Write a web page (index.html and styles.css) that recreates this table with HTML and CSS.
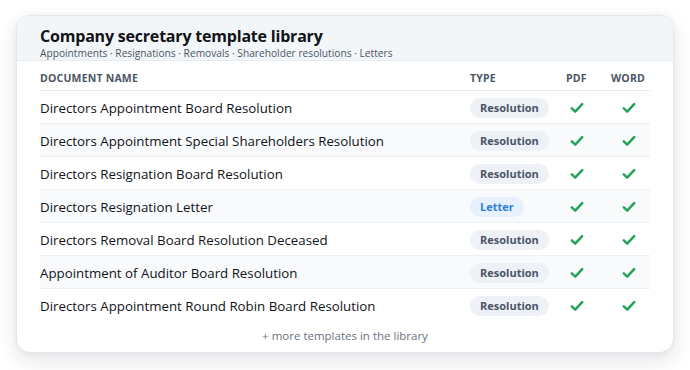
FILE: index.html
```html
<!DOCTYPE html>
<html lang="en">
<head>
<meta charset="utf-8">
<link rel="stylesheet" href="styles.css">
</head>
<body>
<div class="card">
  <div class="card-head">
    <h1 class="title">Company secretary template library</h1>
    <p class="subtitle">Appointments · Resignations · Removals · Shareholder resolutions · Letters</p>
  </div>
  <div class="table">
    <div class="row head">
      <div class="c-name">Document name</div>
      <div class="c-type">Type</div>
      <div class="c-pdf">PDF</div>
      <div class="c-word">Word</div>
    </div>
    <div class="row">
      <div class="c-name">Directors Appointment Board Resolution</div>
      <div class="c-type"><span class="badge">Resolution</span></div>
      <div class="c-pdf"><svg class="chk" viewBox="0 0 14 12"><path d="M1.8 6.4 5.2 9.6 12.2 2.2"/></svg></div>
      <div class="c-word"><svg class="chk" viewBox="0 0 14 12"><path d="M1.8 6.4 5.2 9.6 12.2 2.2"/></svg></div>
    </div>
    <div class="row alt">
      <div class="c-name">Directors Appointment Special Shareholders Resolution</div>
      <div class="c-type"><span class="badge">Resolution</span></div>
      <div class="c-pdf"><svg class="chk" viewBox="0 0 14 12"><path d="M1.8 6.4 5.2 9.6 12.2 2.2"/></svg></div>
      <div class="c-word"><svg class="chk" viewBox="0 0 14 12"><path d="M1.8 6.4 5.2 9.6 12.2 2.2"/></svg></div>
    </div>
    <div class="row">
      <div class="c-name">Directors Resignation Board Resolution</div>
      <div class="c-type"><span class="badge">Resolution</span></div>
      <div class="c-pdf"><svg class="chk" viewBox="0 0 14 12"><path d="M1.8 6.4 5.2 9.6 12.2 2.2"/></svg></div>
      <div class="c-word"><svg class="chk" viewBox="0 0 14 12"><path d="M1.8 6.4 5.2 9.6 12.2 2.2"/></svg></div>
    </div>
    <div class="row alt">
      <div class="c-name">Directors Resignation Letter</div>
      <div class="c-type"><span class="badge letter">Letter</span></div>
      <div class="c-pdf"><svg class="chk" viewBox="0 0 14 12"><path d="M1.8 6.4 5.2 9.6 12.2 2.2"/></svg></div>
      <div class="c-word"><svg class="chk" viewBox="0 0 14 12"><path d="M1.8 6.4 5.2 9.6 12.2 2.2"/></svg></div>
    </div>
    <div class="row">
      <div class="c-name">Directors Removal Board Resolution Deceased</div>
      <div class="c-type"><span class="badge">Resolution</span></div>
      <div class="c-pdf"><svg class="chk" viewBox="0 0 14 12"><path d="M1.8 6.4 5.2 9.6 12.2 2.2"/></svg></div>
      <div class="c-word"><svg class="chk" viewBox="0 0 14 12"><path d="M1.8 6.4 5.2 9.6 12.2 2.2"/></svg></div>
    </div>
    <div class="row alt">
      <div class="c-name">Appointment of Auditor Board Resolution</div>
      <div class="c-type"><span class="badge">Resolution</span></div>
      <div class="c-pdf"><svg class="chk" viewBox="0 0 14 12"><path d="M1.8 6.4 5.2 9.6 12.2 2.2"/></svg></div>
      <div class="c-word"><svg class="chk" viewBox="0 0 14 12"><path d="M1.8 6.4 5.2 9.6 12.2 2.2"/></svg></div>
    </div>
    <div class="row last">
      <div class="c-name">Directors Appointment Round Robin Board Resolution</div>
      <div class="c-type"><span class="badge">Resolution</span></div>
      <div class="c-pdf"><svg class="chk" viewBox="0 0 14 12"><path d="M1.8 6.4 5.2 9.6 12.2 2.2"/></svg></div>
      <div class="c-word"><svg class="chk" viewBox="0 0 14 12"><path d="M1.8 6.4 5.2 9.6 12.2 2.2"/></svg></div>
    </div>
  </div>
  <p class="more">+ more templates in the library</p>
</div>
</body>
</html>
```

FILE: styles.css
```css
* { box-sizing: border-box; }
html, body { margin: 0; padding: 0; background: #ffffff; }
body {
  font-family: "Open Sans", "Noto Sans", sans-serif;
  color: #111827;
  width: 690px;
  height: 370px;
  overflow: hidden;
  padding: 15px 16px 0;
}
.card {
  width: 658px;
  height: 338px;
  background: #ffffff;
  border: 1px solid #e3e7ec;
  border-radius: 14px;
  box-shadow: 0 8px 20px rgba(15, 23, 42, 0.11), 0 0 6px rgba(15, 23, 42, 0.05);
  overflow: hidden;
  display: flex;
  flex-direction: column;
}
.card-head {
  background: #f3f6f9;
  border-bottom: 1px solid #e6ebf0;
  padding: 11px 23px 0;
  height: 45px;
}
.title {
  margin: 0;
  font-size: 16px;
  line-height: 19px;
  font-weight: 700;
  letter-spacing: -0.2px;
  color: #111318;
}
.subtitle {
  margin: 1px 0 0;
  font-size: 10.2px;
  line-height: 12px;
  color: #4b5563;
}
.table {
  margin: 0 23px;
  display: flex;
  flex-direction: column;
}
.row {
  display: grid;
  grid-template-columns: 430px 96px 45px 39px;
  align-items: center;
  height: 33px;
  padding-top: 1px;
  border-bottom: 1px solid #eef1f4;
  font-size: 13.3px;
  color: #111318;
}
.row.alt { background: #f8fafc; }
.row.last { border-bottom: none; }
.row.head {
  height: 30px;
  padding-top: 5px;
  font-size: 10.5px;
  font-weight: 700;
  letter-spacing: 0.2px;
  text-transform: uppercase;
  color: #4b5563;
  border-bottom: 1px solid #e9edf1;
}
.c-pdf, .c-word { display: flex; }
.c-pdf .chk { margin-left: 4px; }
.c-word .chk { margin-left: 11px; }
.badge {
  display: inline-block;
  height: 20px;
  line-height: 20px;
  padding: 0 10px;
  border-radius: 10px;
  background: #eef1f5;
  color: #4a5568;
  font-size: 11px;
  font-weight: 700;
}
.badge.letter {
  background: #e6f1fd;
  color: #2f7fd6;
}
.chk {
  width: 14px;
  height: 12px;
  fill: none;
  stroke: #25a25a;
  stroke-width: 2.5;
  stroke-linecap: round;
  stroke-linejoin: round;
}
.more {
  margin: 6px 0 0;
  text-align: center;
  font-size: 11.5px;
  line-height: 16px;
  color: #6b7280;
}
```
